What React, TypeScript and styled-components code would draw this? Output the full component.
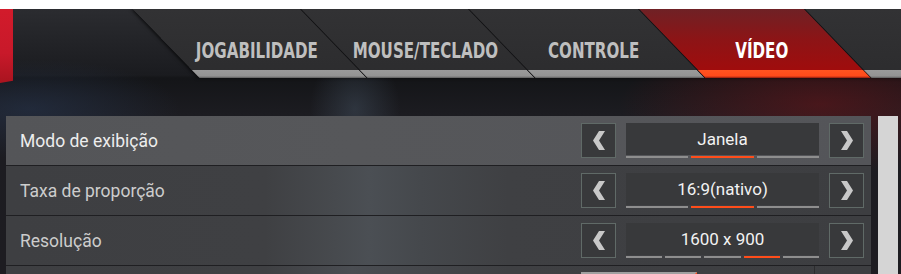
import styled, { createGlobalStyle } from "styled-components";

const GlobalStyle = createGlobalStyle`
  html, body {
    margin: 0;
    padding: 0;
    background: #ffffff;
    overflow: hidden;
  }
`

const Screen = styled.div`
  display: flex;
  flex-direction: column;
  box-sizing: border-box;
  width: 901px;
  height: 265px;
  margin-top: 9px;
  overflow: hidden;
  background:
    radial-gradient(ellipse 150px 50px at 30px 100px, rgba(38, 52, 76, 0.6), transparent),
    radial-gradient(ellipse 45px 60px at 355px 100px, rgba(70, 84, 100, 0.45), transparent),
    radial-gradient(ellipse 200px 70px at 820px 95px, rgba(110, 20, 24, 0.55), transparent),
    linear-gradient(180deg, #2b2c30 0%, #1a1b1f 25%, #141518 26%, #1c1c21 40%, #1d1c21 100%);
  font-family: "DejaVu Sans Condensed", "DejaVu Sans", sans-serif;
`

const Header = styled.header`
  display: flex;
  align-items: flex-start;
  height: 69px;
  flex-shrink: 0;
`

const RedTag = styled.div`
  flex-shrink: 0;
  width: 13px;
  height: 74px;
  background: linear-gradient(180deg, #d21b2b 0%, #c8192a 60%, #a9141f 100%);
  clip-path: polygon(0 0, 100% 0, 100% 97%, 0 100%);
`

const TabBar = styled.nav`
  display: flex;
  flex-shrink: 0;
  width: 900px;
  height: 69px;
  margin-left: 120px;
  transform: skewX(44deg);
  transform-origin: top left;
  background: linear-gradient(180deg, #323234 0%, #2c2c2e 100%);
  box-shadow: -2px 0 3px rgba(0, 0, 0, 0.7);
`

const Tab = styled.div<{ $w?: number; $active?: boolean; $sep?: boolean }>`
  display: flex;
  flex-direction: column;
  flex: ${(p) => (p.$w ? `0 0 ${p.$w}px` : "1 1 auto")};
  min-width: 0;
  box-sizing: border-box;
  border-left: ${(p) => (p.$sep || p.$active ? "1px solid #0c0c0e" : "none")};
  border-right: ${(p) => (p.$active ? "1px solid #0c0c0e" : "none")};
  background: ${(p) =>
    p.$active
      ? "linear-gradient(180deg, #6f2125 0%, #8d1416 45%, #a50a0a 100%)"
      : "transparent"};
`

const TabLabel = styled.div`
  flex: 1;
  display: flex;
  align-items: center;
  justify-content: center;
  padding-top: 23px;
  min-width: 0;
`

const TabText = styled.span<{ $active?: boolean }>`
  display: inline-block;
  transform: skewX(-44deg) scaleX(0.8);
  font-size: 21px;
  font-weight: bold;
  color: ${(p) => (p.$active ? "#ffffff" : "#bfbfbf")};
  white-space: nowrap;
`

const TabLine = styled.div<{ $active?: boolean }>`
  height: 8px;
  background: ${(p) =>
    p.$active
      ? "linear-gradient(180deg, #ff5420 0%, #ff4a1a 75%, #8c1c10 100%)"
      : "linear-gradient(180deg, #9a9a9a 0%, #939393 75%, #5c5c5c 100%)"};
`

const Content = styled.div`
  display: flex;
  margin-top: 38px;
  padding-left: 6px;
  gap: 7px;
`

const List = styled.div`
  display: flex;
  flex-direction: column;
  width: 865px;
`

const Row = styled.div<{ $focused?: boolean }>`
  display: flex;
  align-items: center;
  box-sizing: border-box;
  height: 50px;
  padding: 0 7px 0 14px;
  border-bottom: 1px solid #1f1f22;
  background: ${(p) =>
    p.$focused
      ? "linear-gradient(90deg, #545558 0%, #56575a 40%, #545559 100%)"
      : "linear-gradient(90deg, #3e3f42 0%, #3f4043 30%, #474a4e 38%, #4b4f54 42%, #45484c 48%, #3f4043 58%, #3d3e41 100%)"};
`

const Label = styled.span<{ $focused?: boolean }>`
  flex: 1;
  font-family: Roboto, "Noto Sans", sans-serif;
  font-size: 17.5px;
  color: ${(p) => (p.$focused ? "#ededed" : "#cdcdcd")};
`

const Selector = styled.div`
  display: flex;
  align-items: flex-start;
  gap: 10px;
  height: 35px;
`

const ArrowButton = styled.div`
  display: flex;
  align-items: center;
  justify-content: center;
  box-sizing: border-box;
  width: 35px;
  height: 35px;
  border: 1px solid #606a67;
  background: #38393b;
`

const ValueBox = styled.div`
  display: flex;
  flex-direction: column;
  width: 193px;
  height: 35px;
`

const ValueText = styled.div`
  display: flex;
  align-items: center;
  justify-content: center;
  height: 32px;
  background: #38393b;
  font-family: Roboto, "Noto Sans", sans-serif;
  font-size: 17px;
  color: #f2f2f2;
`

const Segments = styled.div`
  display: flex;
  gap: 3px;
  margin-top: 1px;
`

const Segment = styled.div<{ $on?: boolean }>`
  flex: 1;
  height: 2px;
  background: ${(p) => (p.$on ? "#ff4d1a" : "#8e8e8e")};
`

const PartialRow = styled.div`
  display: flex;
  box-sizing: border-box;
  height: 20px;
  padding-left: 575px;
  background: linear-gradient(90deg, #3e3f42 0%, #3f4043 30%, #4a4d52 40%, #3f4043 58%, #3d3e41 100%);
`

const SliderTrack = styled.div`
  width: 114px;
  margin-top: 6px;
  border-top: 2px solid #a0a0a0;
  border-right: 2px solid #ff4d1a;
`

const SliderEnd = styled.div`
  width: 1px;
  margin-left: 117px;
  background: #2c2c2e;
`

const Scrollbar = styled.div`
  width: 20px;
  height: 160px;
  background: #d5d5d5;
`

const Chevron = ({ dir }: { dir: "left" | "right" }) => (
  <svg width="12" height="19" viewBox="0 0 12 19">
    <polygon
      fill="#c8c8c8"
      points={
        dir === "left"
          ? "6,0 12,0 6,9.5 12,19 6,19 0,9.5"
          : "0,0 6,0 12,9.5 6,19 0,19 6,9.5"
      }
    />
  </svg>
);

const tabs = [
  { name: "JOGABILIDADE", w: 167 },
  { name: "MOUSE/TECLADO", w: 168 },
  { name: "CONTROLE", w: 170 },
  { name: "VÍDEO", w: 167, active: true },
];

const settings = [
  { label: "Modo de exibição", value: "Janela", count: 3, index: 1 },
  { label: "Taxa de proporção", value: "16:9(nativo)", count: 3, index: 1 },
  { label: "Resolução", value: "1600 x 900", count: 5, index: 3 },
];

const App = () => {
  return (
    <>
      <GlobalStyle />
      <Screen>
        <Header>
          <RedTag />
          <TabBar>
            {tabs.map((tab, i) => (
              <Tab key={tab.name} $w={tab.w} $active={tab.active} $sep={i > 0 && !tab.active}>
                <TabLabel>
                  <TabText $active={tab.active}>{tab.name}</TabText>
                </TabLabel>
                <TabLine $active={tab.active} />
              </Tab>
            ))}
            <Tab>
              <TabLabel />
              <TabLine />
            </Tab>
          </TabBar>
        </Header>
        <Content>
          <List>
            {settings.map((s, i) => (
              <Row key={s.label} $focused={i === 0}>
                <Label $focused={i === 0}>{s.label}</Label>
                <Selector>
                  <ArrowButton>
                    <Chevron dir="left" />
                  </ArrowButton>
                  <ValueBox>
                    <ValueText>{s.value}</ValueText>
                    <Segments>
                      {Array.from({ length: s.count }).map((_, k) => (
                        <Segment key={k} $on={k === s.index} />
                      ))}
                    </Segments>
                  </ValueBox>
                  <ArrowButton>
                    <Chevron dir="right" />
                  </ArrowButton>
                </Selector>
              </Row>
            ))}
            <PartialRow>
              <SliderTrack />
              <SliderEnd />
            </PartialRow>
          </List>
          <Scrollbar />
        </Content>
      </Screen>
    </>
  );
};

export default App;
